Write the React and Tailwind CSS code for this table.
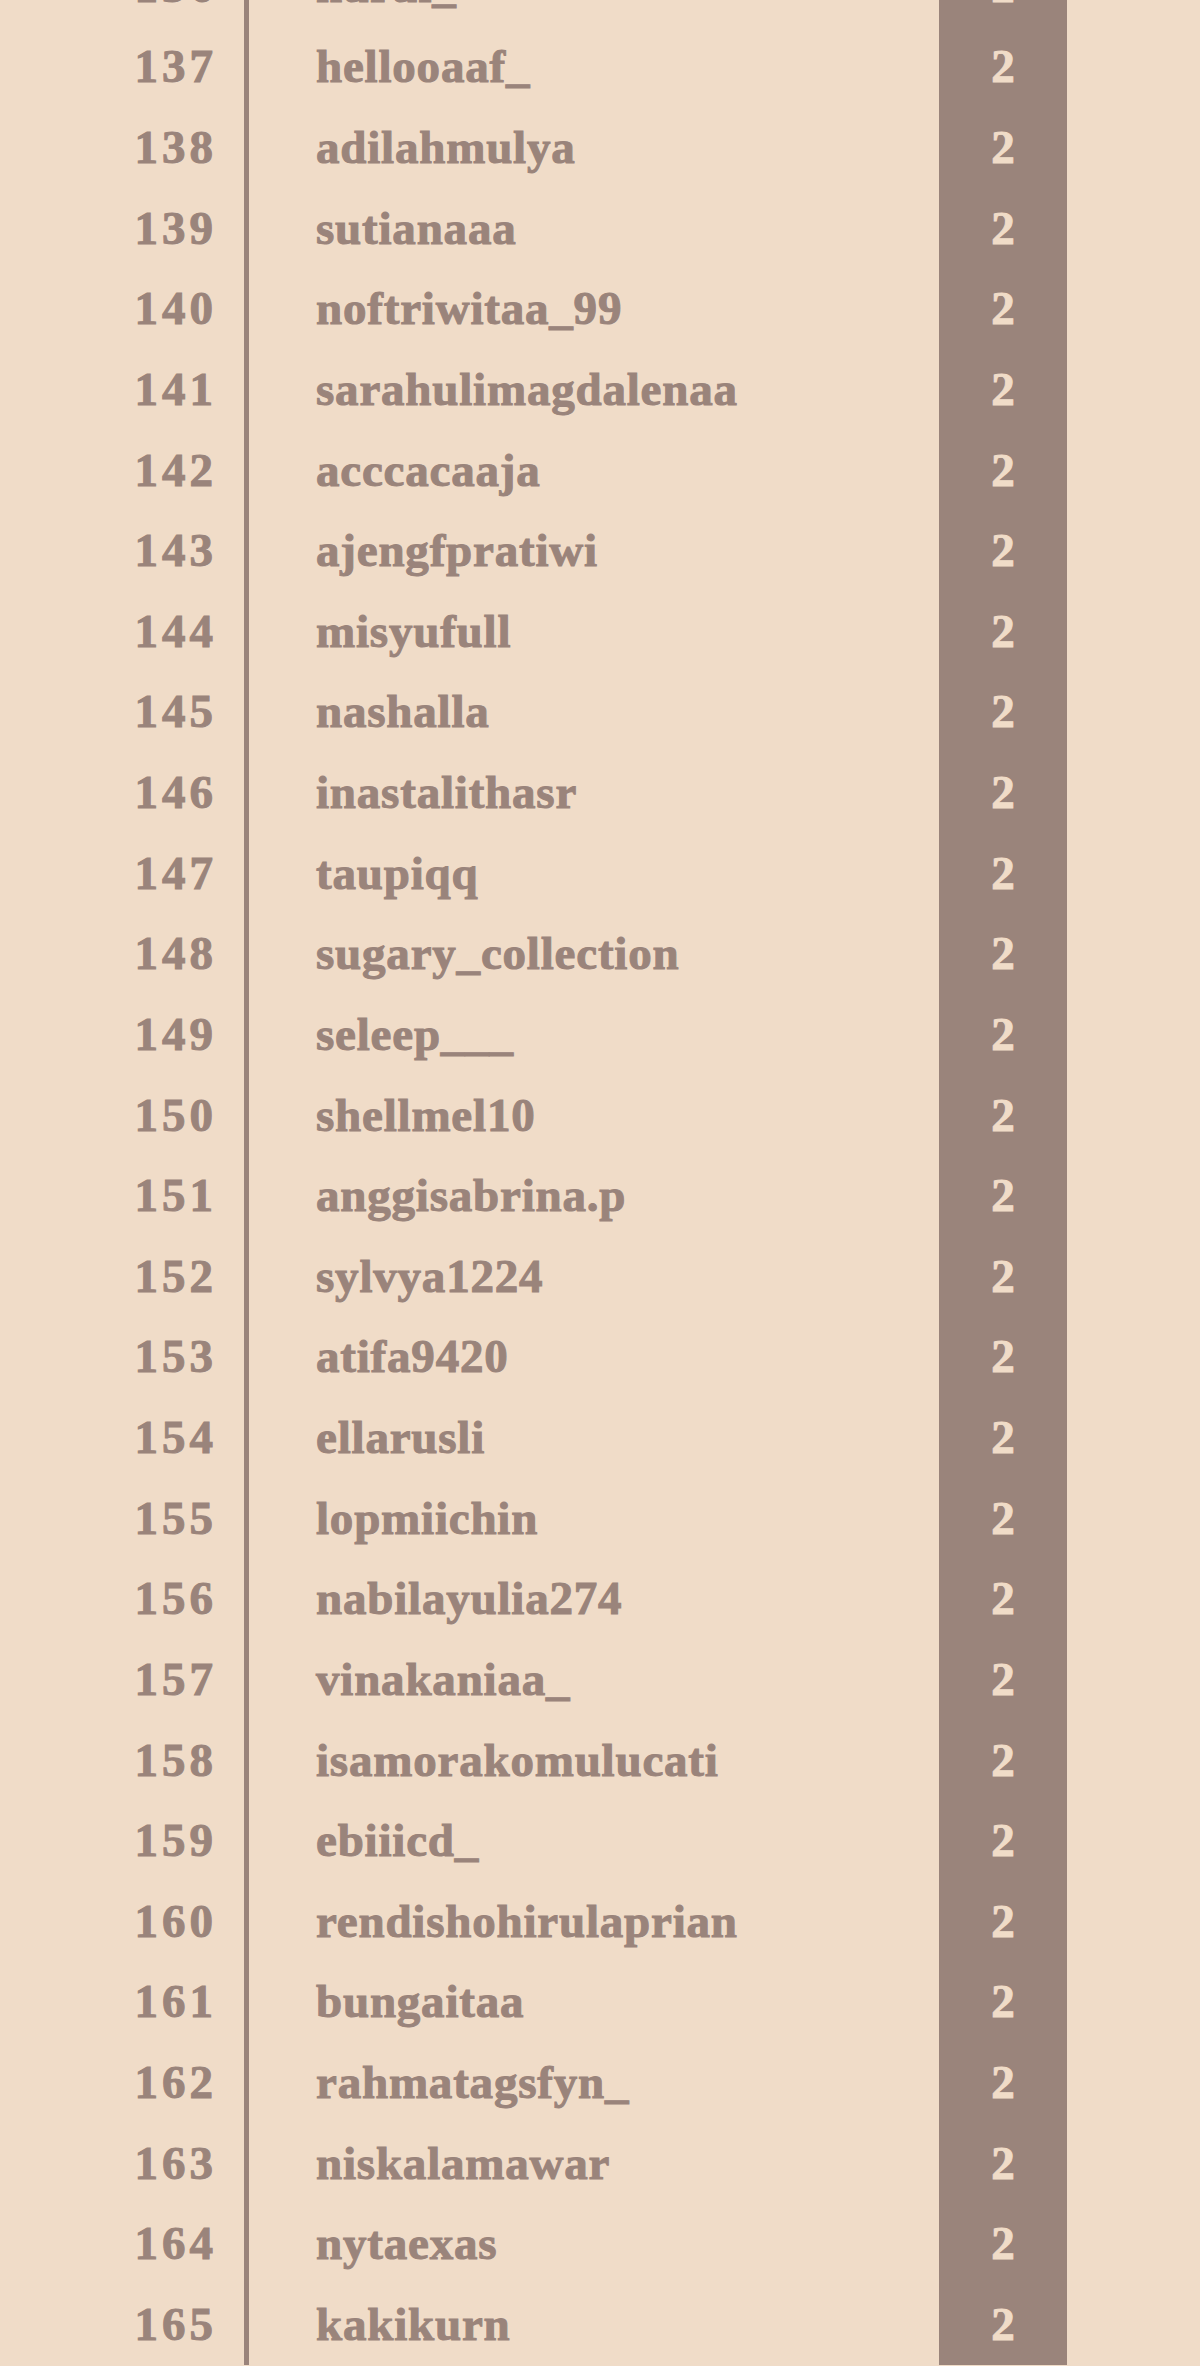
import React from 'react';

const rows = [
  [136, 'nurul_'],
  [137, 'hellooaaf_'],
  [138, 'adilahmulya'],
  [139, 'sutianaaa'],
  [140, 'noftriwitaa_99'],
  [141, 'sarahulimagdalenaa'],
  [142, 'acccacaaja'],
  [143, 'ajengfpratiwi'],
  [144, 'misyufull'],
  [145, 'nashalla'],
  [146, 'inastalithasr'],
  [147, 'taupiqq'],
  [148, 'sugary_collection'],
  [149, 'seleep___'],
  [150, 'shellmel10'],
  [151, 'anggisabrina.p'],
  [152, 'sylvya1224'],
  [153, 'atifa9420'],
  [154, 'ellarusli'],
  [155, 'lopmiichin'],
  [156, 'nabilayulia274'],
  [157, 'vinakaniaa_'],
  [158, 'isamorakomulucati'],
  [159, 'ebiiicd_'],
  [160, 'rendishohirulaprian'],
  [161, 'bungaitaa'],
  [162, 'rahmatagsfyn_'],
  [163, 'niskalamawar'],
  [164, 'nytaexas'],
  [165, 'kakikurn'],
];

function Row({ rank, name }) {
  return (
    <div className="flex h-[80.63px]">
      <div className="w-[244px] pr-[27px] flex items-center justify-end tracking-[4px]">
        {rank}
      </div>
      <div className="w-[5px] bg-[#9a847b]" />
      <div className="flex-1 pl-[67px] flex items-center tracking-[0.8px]">
        {name}
      </div>
      <div className="w-[128px] bg-[#9a847b] text-[#f0dcc8] flex items-center justify-center">
        2
      </div>
      <div className="w-[133px]" />
    </div>
  );
}

export default function App() {
  return (
    <div className="h-[2366px] overflow-hidden bg-[#f0dcc8] text-[#9a847b] font-bold text-[47px] leading-none font-['Liberation_Serif',serif] [-webkit-text-stroke:1px]">
      <div className="-mt-[54px]">
        {rows.map(([rank, name]) => (
          <Row key={rank} rank={rank} name={name} />
        ))}
      </div>
    </div>
  );
}
